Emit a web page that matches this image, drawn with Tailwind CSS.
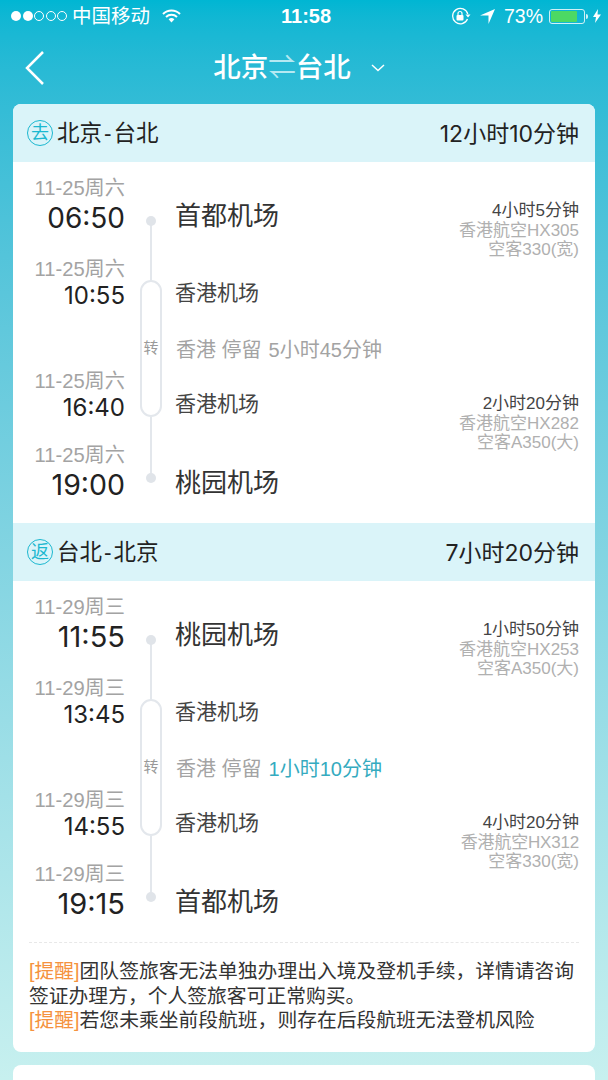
<!DOCTYPE html>
<html lang="zh-CN">
<head>
  <meta charset="UTF-8">
  <title>行程详情</title>
  <script src="https://cdn.jsdelivr.net/npm/@tailwindcss/browser@4"></script>
</head>
<body class="h-[1080px] overflow-hidden bg-gradient-to-b from-[#00b6d3] to-[#c7f0ef] font-['Liberation_Sans','Noto_Sans_CJK_SC',sans-serif]">

  <!-- Status bar -->
  <div class="relative flex h-[32px] items-center pl-[11px] pr-[7px] text-white">
    <div class="flex gap-[1.5px]">
      <span class="h-[10px] w-[10px] rounded-full bg-white"></span>
      <span class="h-[10px] w-[10px] rounded-full bg-white"></span>
      <span class="h-[10px] w-[10px] rounded-full border border-white"></span>
      <span class="h-[10px] w-[10px] rounded-full border border-white"></span>
      <span class="h-[10px] w-[10px] rounded-full border border-white"></span>
    </div>
    <span class="ml-[5px] text-[19.500px] leading-[32px]">中国移动</span>
    <svg class="ml-[12px]" width="19" height="14" viewBox="0 0 19 14"><path d="M1 5a12 12 0 0 1 17 0M4 8a8 8 0 0 1 11 0" fill="none" stroke="#fff" stroke-width="2"/><path d="M6.600 10.300a4.200 4.200 0 0 1 5.800 0L9.500 13.600z" fill="#fff"/></svg>
    <span class="absolute left-[281px] top-0 text-[20px] font-semibold leading-[32px]">11:58</span>
    <svg class="ml-auto" width="20" height="18" viewBox="0 0 20 18"><path d="M16.500 12A7.700 7.700 0 1 1 16.800 7" fill="none" stroke="#fff" stroke-width="1.300"/><path d="M14.500 7.500h5l-2.500 3z" fill="#fff"/><rect x="5.500" y="8" width="7" height="5.500" rx="1" fill="#fff"/><path d="M7 8V6.500a2 2 0 0 1 4 0V8" fill="none" stroke="#fff" stroke-width="1.200"/></svg>
    <svg class="ml-[9px]" width="15" height="15" viewBox="0 0 15 15"><path d="M15 0L8.500 15V6.500H0z" fill="#fff"/></svg>
    <span class="ml-[9px] text-[19.500px] leading-[32px]">73%</span>
    <div class="ml-[6px] flex h-[15px] w-[36px] rounded-[3px] border border-white/80 p-[1px]">
      <span class="h-full w-[26px] rounded-[1px] bg-[#4cd964]"></span>
    </div>
    <span class="ml-[1px] h-[5px] w-[2px] rounded-r-full bg-white/80"></span>
    <svg class="ml-[5px]" width="8" height="14" viewBox="0 0 8 14"><path d="M5 0L0 8h3l-1 6 6-8.500H4.500z" fill="#fff"/></svg>
  </div>

  <!-- Nav -->
  <div class="relative flex h-[72px] items-center justify-center text-white">
    <svg class="absolute left-[24px] top-[18px]" width="21" height="36" viewBox="0 0 21 36"><path d="M19 2L3 18l16 16" fill="none" stroke="#fff" stroke-width="2.500"/></svg>
    <div class="ml-[-10px] flex items-center text-[27.500px] font-medium leading-[72px]">
      <span>北京</span><span class="w-[27.500px] text-center font-normal text-[#b5e9f2]">⇌</span><span>台北</span>
    </div>
    <svg class="ml-[20px]" width="14" height="8" viewBox="0 0 14 8"><path d="M1 1l6 5.500L13 1" fill="none" stroke="#fff" stroke-width="1.500"/></svg>
  </div>

  <!-- Itinerary card -->
  <div class="mx-[13px] overflow-hidden rounded-[8px] bg-white">

    <!-- Outbound -->
    <div class="flex h-[58px] items-center bg-[#daf4f9] pl-[14px] pr-[16px]">
      <span class="flex h-[26px] w-[26px] items-center justify-center rounded-full border border-[#1cb8d0] text-[18px] text-[#1cb8d0]">去</span>
      <span class="ml-[4px] pt-[2px] text-[22.500px] text-[#222]">北京<span class="mx-[2px]">-</span>台北</span>
      <span class="ml-auto pt-[2px] font-['Inter','Noto_Sans_CJK_SC'] text-[23px] text-[#222]">12小时10分钟</span>
    </div>
    <div class="relative h-[361px] pt-[14px] pr-[16px]">
      <div class="absolute left-[137px] top-[59px] h-[60px] w-[2px] bg-[#e3e7ec]"></div>
      <div class="absolute left-[133px] top-[54px] h-[10px] w-[10px] rounded-full bg-[#e0e4e9]"></div>
      <div class="absolute left-[127px] top-[118px] flex h-[137px] w-[22px] items-center justify-center rounded-full border-2 border-[#e3e7ec] bg-white text-[15px] text-[#999]">转</div>
      <div class="absolute left-[137px] top-[255px] h-[60px] w-[2px] bg-[#e3e7ec]"></div>
      <div class="absolute left-[133px] top-[311px] h-[10px] w-[10px] rounded-full bg-[#e0e4e9]"></div>

      <div class="flex h-[81px]">
        <div class="w-[113px] pr-[1px] text-right">
          <div class="text-[20.200px] leading-[24px] text-[#a3a3a3]">11-25周六</div>
          <div class="pt-[1px] font-['Inter'] text-[28px] leading-[34px] text-[#222]">06:50</div>
        </div>
        <div class="ml-[49px] pt-[23px] text-[26px] leading-[34px] text-[#333]">首都机场</div>
        <div class="ml-auto pt-[25px] text-right text-[17px] leading-[19.500px] text-[#b0b0b0]">
          <div class="text-[#444]">4小时5分钟</div>
          <div>香港航空HX305</div>
          <div>空客330(宽)</div>
        </div>
      </div>
      <div class="flex h-[78px]">
        <div class="w-[113px] pr-[1px] text-right">
          <div class="text-[20.200px] leading-[24px] text-[#a3a3a3]">11-25周六</div>
          <div class="pt-[1px] font-['Inter'] text-[24px] leading-[28px] text-[#222]">10:55</div>
        </div>
        <div class="ml-[49px] pt-[22px] text-[21px] leading-[28px] text-[#444]">香港机场</div>
      </div>
      <div class="mb-[5px] ml-[163px] pt-[2px] text-[20px] leading-[27px] text-[#a3a3a3]">香港 停留<span class="ml-[7px]">5小时45分钟</span></div>
      <div class="flex h-[74px]">
        <div class="w-[113px] pr-[1px] text-right">
          <div class="text-[20.200px] leading-[24px] text-[#a3a3a3]">11-25周六</div>
          <div class="pt-[1px] font-['Inter'] text-[24px] leading-[28px] text-[#222]">16:40</div>
        </div>
        <div class="ml-[49px] pt-[21px] text-[21px] leading-[28px] text-[#444]">香港机场</div>
        <div class="ml-auto pt-[25px] text-right text-[17px] leading-[19.500px] text-[#b0b0b0]">
          <div class="text-[#444]">2小时20分钟</div>
          <div>香港航空HX282</div>
          <div>空客A350(大)</div>
        </div>
      </div>
      <div class="flex">
        <div class="w-[113px] pr-[1px] text-right">
          <div class="text-[20.200px] leading-[24px] text-[#a3a3a3]">11-25周六</div>
          <div class="pt-[1px] font-['Inter'] text-[28.500px] leading-[34px] text-[#222]">19:00</div>
        </div>
        <div class="ml-[49px] pt-[23px] text-[26px] leading-[34px] text-[#333]">桃园机场</div>
      </div>
    </div>

    <!-- Return -->
    <div class="flex h-[58px] items-center bg-[#daf4f9] pl-[14px] pr-[16px]">
      <span class="flex h-[26px] w-[26px] items-center justify-center rounded-full border border-[#1cb8d0] text-[18px] text-[#1cb8d0]">返</span>
      <span class="ml-[4px] pt-[2px] text-[22.500px] text-[#222]">台北<span class="mx-[2px]">-</span>北京</span>
      <span class="ml-auto pt-[2px] font-['Inter','Noto_Sans_CJK_SC'] text-[23px] text-[#222]">7小时20分钟</span>
    </div>
    <div class="relative h-[361px] pt-[14px] pr-[16px]">
      <div class="absolute left-[137px] top-[59px] h-[60px] w-[2px] bg-[#e3e7ec]"></div>
      <div class="absolute left-[133px] top-[54px] h-[10px] w-[10px] rounded-full bg-[#e0e4e9]"></div>
      <div class="absolute left-[127px] top-[118px] flex h-[137px] w-[22px] items-center justify-center rounded-full border-2 border-[#e3e7ec] bg-white text-[15px] text-[#999]">转</div>
      <div class="absolute left-[137px] top-[255px] h-[60px] w-[2px] bg-[#e3e7ec]"></div>
      <div class="absolute left-[133px] top-[311px] h-[10px] w-[10px] rounded-full bg-[#e0e4e9]"></div>

      <div class="flex h-[81px]">
        <div class="w-[113px] pr-[1px] text-right">
          <div class="text-[20.200px] leading-[24px] text-[#a3a3a3]">11-29周三</div>
          <div class="pt-[1px] font-['Inter'] text-[29px] leading-[34px] text-[#222]">11:55</div>
        </div>
        <div class="ml-[49px] pt-[23px] text-[26px] leading-[34px] text-[#333]">桃园机场</div>
        <div class="ml-auto pt-[25px] text-right text-[17px] leading-[19.500px] text-[#b0b0b0]">
          <div class="text-[#444]">1小时50分钟</div>
          <div>香港航空HX253</div>
          <div>空客A350(大)</div>
        </div>
      </div>
      <div class="flex h-[78px]">
        <div class="w-[113px] pr-[1px] text-right">
          <div class="text-[20.200px] leading-[24px] text-[#a3a3a3]">11-29周三</div>
          <div class="pt-[1px] font-['Inter'] text-[24px] leading-[28px] text-[#222]">13:45</div>
        </div>
        <div class="ml-[49px] pt-[22px] text-[21px] leading-[28px] text-[#444]">香港机场</div>
      </div>
      <div class="mb-[5px] ml-[163px] pt-[2px] text-[20px] leading-[27px] text-[#a3a3a3]">香港 停留<span class="ml-[7px] text-[#35abc0]">1小时10分钟</span></div>
      <div class="flex h-[74px]">
        <div class="w-[113px] pr-[1px] text-right">
          <div class="text-[20.200px] leading-[24px] text-[#a3a3a3]">11-29周三</div>
          <div class="pt-[1px] font-['Inter'] text-[24px] leading-[28px] text-[#222]">14:55</div>
        </div>
        <div class="ml-[49px] pt-[21px] text-[21px] leading-[28px] text-[#444]">香港机场</div>
        <div class="ml-auto pt-[25px] text-right text-[17px] leading-[19.500px] text-[#b0b0b0]">
          <div class="text-[#444]">4小时20分钟</div>
          <div class="tracking-[-0.2px]">香港航空HX312</div>
          <div>空客330(宽)</div>
        </div>
      </div>
      <div class="flex">
        <div class="w-[113px] pr-[1px] text-right">
          <div class="text-[20.200px] leading-[24px] text-[#a3a3a3]">11-29周三</div>
          <div class="pt-[1px] font-['Inter'] text-[29px] leading-[34px] text-[#222]">19:15</div>
        </div>
        <div class="ml-[49px] pt-[23px] text-[26px] leading-[34px] text-[#333]">首都机场</div>
      </div>
    </div>

    <!-- Notice -->
    <div class="mx-[16px] h-[110px] border-t border-dashed border-[#e8e8e8] pt-[16px] pb-[20px] text-[19.800px] leading-[24.500px] text-[#333]">
      <span class="text-[#f5923e]">[提醒]</span>团队签旅客无法单独办理出入境及登机手续，详情请咨询<br>
      签证办理方，个人签旅客可正常购买。<br>
      <span class="text-[#f5923e]">[提醒]</span>若您未乘坐前段航班，则存在后段航班无法登机风险
    </div>
  </div>

  <!-- Next card, cut off by the screen -->
  <div class="mx-[13px] mt-[13px] h-[60px] rounded-[8px] bg-white"></div>

</body>
</html>
